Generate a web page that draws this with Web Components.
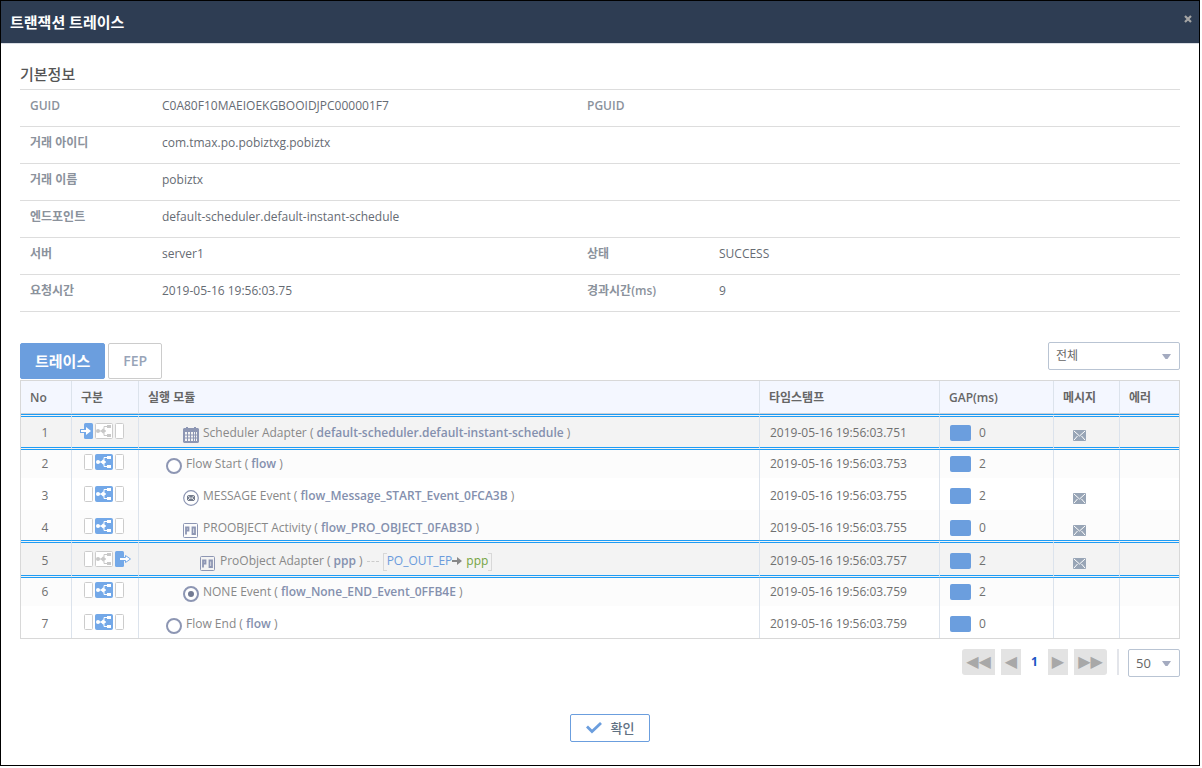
<!DOCTYPE html>
<html lang="ko">
<head>
<meta charset="utf-8">
<title>트랜잭션 트레이스</title>
<style>
  body {
    margin: 0 2px 2px 0;
    background: #fff;
    color: #707070;
    font: 12px/20px "Open Sans", "Noto Sans CJK KR", sans-serif;
  }
</style>
</head>
<body>
<trace-dialog heading="트랜잭션 트레이스">
  <info-section heading="기본정보"></info-section>
  <trace-toolbar></trace-toolbar>
  <trace-table></trace-table>
  <trace-pager></trace-pager>
  <confirm-button slot="footer">확인</confirm-button>
</trace-dialog>

<script>
class BaseElement extends HTMLElement {
  connectedCallback() {
    if (!this.shadowRoot) this.attachShadow({ mode: 'open' }).innerHTML = this.render();
  }
}

/* Dialog frame: title bar, body slot and footer slot */
customElements.define('trace-dialog', class extends BaseElement {
  render() {
    return `
    <style>
      :host { display: flex; flex-direction: column; box-sizing: border-box; min-height: calc(100vh - 2px); border: 1px solid #000; background: #fff; }
      header { display: flex; justify-content: space-between; align-items: center; height: 42px; padding: 0 2px 0 9px; background: #2e3d53; border-bottom: 1px solid #d9dde4; }
      h1 { margin: 0; font-size: 15px; line-height: 20px; font-weight: 600; color: #fff; }
      button { align-self: flex-start; display: grid; place-items: center; width: 18px; height: 18px; margin: 9px 0 0; padding: 0; border: 0; background: none; }
      main { padding: 20px 19px 0; }
      footer { display: flex; justify-content: center; padding: 37px 0 23px 20px; }
    </style>
    <header>
      <h1>${this.getAttribute('heading')}</h1>
      <button type="button" aria-label="닫기"><svg width="8" height="8" viewBox="0 0 8 8"><path d="M1 1l6 6M7 1l-6 6" stroke="#a5a5a5" stroke-width="2.2"/></svg></button>
    </header>
    <main><slot></slot></main>
    <footer><slot name="footer"></slot></footer>`;
  }
});

/* Basic transaction properties */
customElements.define('info-section', class extends BaseElement {
  render() {
    const rows = [
      ['GUID', 'C0A80F10MAEIOEKGBOOIDJPC000001F7', 'PGUID', ''],
      ['거래 아이디', 'com.tmax.po.pobiztxg.pobiztx'],
      ['거래 이름', 'pobiztx'],
      ['엔드포인트', 'default-scheduler.default-instant-schedule'],
      ['서버', 'server1', '상태', 'SUCCESS'],
      ['요청시간', '2019-05-16 19:56:03.75', '경과시간(ms)', '9'],
    ];
    const row = ([a, b, c, d]) => c
      ? `<tr><th scope="row">${a}</th><td>${b}</td><th scope="row">${c}</th><td>${d}</td></tr>`
      : `<tr><th scope="row">${a}</th><td colspan="3">${b}</td></tr>`;
    return `
    <style>
      :host { display: block; }
      h2 { margin: 0 0 5px; font-size: 15px; line-height: 20px; font-weight: 500; color: #555; }
      table { width: 100%; table-layout: fixed; border-spacing: 0; border-top: 1px solid #ddd; }
      .label { width: 132px; }
      .value { width: 425px; }
      th, td { height: 20px; padding: 6px 0 10px 10px; border-bottom: 1px solid #ddd; text-align: left; vertical-align: top; }
      th { font-weight: 600; color: #8b929c; }
      td { color: #666b73; }
    </style>
    <h2>${this.getAttribute('heading')}</h2>
    <table>
      <colgroup><col class="label"><col class="value"><col class="label"><col></colgroup>
      <tbody>${rows.map(row).join('')}</tbody>
    </table>`;
  }
});

/* Drop-down with a flat arrow */
customElements.define('select-box', class extends BaseElement {
  render() {
    return `
    <style>
      :host { display: inline-grid; align-items: center; }
      select, svg { grid-area: 1 / 1; }
      select { appearance: none; box-sizing: border-box; width: 100%; height: 28px; margin: 0; padding: 0 7px; border: 1px solid #b9c4d3; border-radius: 2px; background: #fff; color: #666; font: inherit; }
      svg { justify-self: end; margin-right: 9px; pointer-events: none; }
    </style>
    <select aria-label="${this.getAttribute('label')}"><option>${this.getAttribute('value')}</option></select>
    <svg width="9" height="5" viewBox="0 0 9 5"><path d="M0 0h9L5.500 5h-2z" fill="#a4abc0"/></svg>`;
  }
});

/* Tabs and filter above the table */
customElements.define('trace-toolbar', class extends BaseElement {
  render() {
    return `
    <style>
      :host { display: flex; justify-content: space-between; align-items: flex-start; margin-top: 30px; }
      .tabs { display: flex; gap: 3px; padding: 1px 0; }
      button { box-sizing: border-box; height: 36px; margin: 0; padding: 0 14px; border: 1px solid #ccc; border-radius: 2px; background: #fff; color: #98a4b8; font: 600 14px/20px "Open Sans", "Noto Sans CJK KR", sans-serif; }
      button[aria-selected="true"] { border-color: #6b9ede; background: #6b9ede; color: #fff; font-size: 15px; font-weight: 700; }
      select-box { width: 132px; }
    </style>
    <div class="tabs" role="tablist">
      <button type="button" role="tab" aria-selected="true">트레이스</button>
      <button type="button" role="tab" aria-selected="false">FEP</button>
    </div>
    <select-box label="필터" value="전체"></select-box>`;
  }
});

/* Where in the flow a step runs: inbound, engine or outbound */
customElements.define('stage-icon', class extends BaseElement {
  render() {
    const stage = this.getAttribute('stage');
    const box = x => `<rect x="${x}.5" y=".5" width="8" height="15" rx="1" fill="#fff" stroke="#ccc"/>`;
    const on = stage === 'flow';
    const ink = on ? '#fff' : '#c8c8c8';
    const inbound = stage === 'in'
      ? `<rect x="4" width="9" height="16" rx="1.500" fill="#73a8e8"/><path d="M0 6h5v4H0z" fill="#73a8e8"/><path d="M1 7h5V4l5 4-5 4V9H1z" fill="#fff"/>`
      : box(4);
    const outbound = stage === 'out'
      ? `<rect x="35" width="9" height="16" rx="1.500" fill="#73a8e8"/><path d="M40 7h5.500V4.500l5 3.500-5 3.500V9H40z" fill="#fff"/><path d="M44 6.500h1.500v-2L50.500 8l-5 3.500v-2H44" fill="#fff" stroke="#73a8e8"/>`
      : box(35);
    return `
    <style>:host { display: block; height: 20px; } svg { display: block; }</style>
    <svg width="52" height="16" viewBox="0 0 52 16">
      ${inbound}
      <rect x="15.500" y=".5" width="17" height="15" rx="1" fill="${on ? '#73a8e8' : '#fff'}" stroke="${on ? '#73a8e8' : '#ccc'}"/>
      <path d="M17 8h9M24 8V3.500h4M24 8v4.500h4" fill="none" stroke="${ink}"/>
      <circle cx="18" cy="8" r="2" fill="${ink}"/>
      <path d="M20.500 8L23.500 5v6zM23 5.500L26 8l-3 2.500z" fill="${ink}"/>
      <rect x="27" y="2" width="4" height="3" fill="${ink}"/><rect x="27" y="11" width="4" height="3" fill="${ink}"/>
      ${outbound}
    </svg>`;
  }
});

/* Kind of module that was executed */
customElements.define('module-icon', class extends BaseElement {
  render() {
    const c = '#8d96b3';
    const shapes = {
      calendar: `<path d="M1 1h2V0h2v1h6V0h2v1h2l1 1v13l-1 1H1l-1-1V2z" fill="${c}"/><path d="M1.500 5h13v9.500h-13z" fill="#f3f3f3"/><path d="M4.500 5v10M7.500 5v10M10.500 5v10M12.500 5v10M1 8h14M1 11h14" stroke="${c}"/><path d="M1.500 4.500h13v10h-13z" fill="none" stroke="${c}"/>`,
      circle: `<circle cx="8" cy="8" r="7" fill="#fff" stroke="${c}" stroke-width="2"/>`,
      message: `<circle cx="8" cy="8" r="7.300" fill="#fff" stroke="${c}" stroke-width="1.200"/><path d="M4 5h8v6H4z" fill="#737b8c"/><path d="M4 5l4 3.500L12 5M4 11l3-3M12 11L9 8" fill="none" stroke="#fff" stroke-width=".8"/>`,
      end: `<circle cx="8" cy="8" r="7" fill="#fff" stroke="${c}" stroke-width="2"/><circle cx="8" cy="8" r="3" fill="#737b93"/>`,
      po: `<rect x=".5" y="1.500" width="14" height="14" rx="1" fill="none" stroke="${c}"/><path d="M3 12.500V5.500h2.500v3H3M9.500 5.500h2.500v6.500H9.500z" fill="none" stroke="${c}" stroke-width="1.800"/>`,
    };
    return `
    <style>:host { display: block; } svg { display: block; }</style>
    <svg width="16" height="16" viewBox="0 0 16 16">${shapes[this.getAttribute('kind')]}</svg>`;
  }
});

/* List of executed steps */
customElements.define('trace-table', class extends BaseElement {
  render() {
    const date = '2019-05-16 19:56:03.';
    const rows = [
      { stage: 'in', level: 1, icon: 'calendar', kind: 'Scheduler Adapter', name: 'default-scheduler.default-instant-schedule', ms: '751', gap: 0, mail: true, edge: true },
      { stage: 'flow', level: 0, icon: 'circle', kind: 'Flow Start', name: 'flow', ms: '753', gap: 2 },
      { stage: 'flow', level: 1, icon: 'message', kind: 'MESSAGE Event', name: 'flow_Message_START_Event_0FCA3B', ms: '755', gap: 2, mail: true },
      { stage: 'flow', level: 1, icon: 'po', kind: 'PROOBJECT Activity', name: 'flow_PRO_OBJECT_0FAB3D', ms: '755', gap: 0, mail: true },
      { stage: 'out', level: 2, icon: 'po', kind: 'ProObject Adapter', name: 'ppp', ms: '757', gap: 2, mail: true, edge: true, route: ['PO_OUT_EP', 'ppp'] },
      { stage: 'flow', level: 1, icon: 'end', kind: 'NONE Event', name: 'flow_None_END_Event_0FFB4E', ms: '759', gap: 2 },
      { stage: 'flow', level: 0, icon: 'circle', kind: 'Flow End', name: 'flow', ms: '759', gap: 0 },
    ];
    const route = ([from, to]) => `
      <span class="dots"></span><span class="route"><span class="from">${from}</span><svg width="10" height="10" viewBox="0 0 10 10"><path d="M0 4h5V1l5 4-5 4V6H0z" fill="#888"/></svg><span class="to">${to}</span></span>`;
    const mail = `<button type="button" class="mail" aria-label="메시지"><svg width="13" height="11" viewBox="0 0 13 11"><rect width="13" height="11" rx="1" fill="#98a5b6"/><path d="M1 1l5.500 5L12 1M1 10l3.500-4M12 10L8.500 6" fill="none" stroke="#fff"/></svg></button>`;
    const row = (r, i) => `
      <tr${r.edge ? ' class="edge"' : ''}>
        <td class="no">${i + 1}</td>
        <td class="stage"><stage-icon stage="${r.stage}"></stage-icon></td>
        <td><div class="module level${r.level}"><module-icon kind="${r.icon}"></module-icon><span>${r.kind} ( <b>${r.name}</b> )</span>${r.route ? route(r.route) : ''}</div></td>
        <td>${date}${r.ms}</td>
        <td><div class="gap"><i></i>${r.gap}</div></td>
        <td class="message">${r.mail ? mail : ''}</td>
        <td></td>
      </tr>`;
    return `
    <style>
      :host { display: block; }
      table { width: 100%; table-layout: fixed; border-spacing: 0; border: 1px solid #d8d8d8; }
      .c-no { width: 51px; } .c-stage { width: 67px; } .c-time { width: 180px; } .c-gap { width: 114px; } .c-mail { width: 66px; } .c-err { width: 59px; }
      th, td { box-sizing: border-box; border-right: 1px solid #dce3ec; text-align: left; }
      th:last-child, td:last-child { border-right: 0; }
      th { height: 33px; padding: 1px 0 0 9px; border-bottom: 1px solid #ccd0d6; background: #f4f7ff; color: #666; font-weight: 600; }
      td { height: 32px; padding: 8px 0 0 10px; vertical-align: top; }
      tr:nth-child(even) td { background: #fcfcfc; }
      tr:has(+ .edge) td { height: 30px; }
      .edge + tr td { height: 28px; padding-top: 4px; }
      tr:nth-child(n).edge td { height: 38px; border-top: 3px double #1e9cf5; border-bottom: 3px double #1e9cf5; background: #f3f3f3; }
      tr:first-child.edge td { height: 36px; padding-top: 6px; }
      tr:nth-child(6) td { background: #fcfcfc; }
      td.no { padding-left: 0; padding-right: 2px; text-align: center; }
      td.stage { padding-left: 8px; }
      td.message { padding-left: 19px; }
      .module { display: flex; align-items: flex-end; gap: 4px; height: 20px; color: #888; white-space: nowrap; }
      .level0 { padding-left: 17px; } .level1 { padding-left: 34px; } .level2 { padding-left: 51px; }
      b { font-weight: 600; color: #8490ae; }
      .dots { align-self: center; width: 12px; border-top: 1px dashed #ccc; }
      .route { position: relative; display: flex; align-items: center; padding: 0 4px; }
      .route::before, .route::after { content: ""; position: absolute; top: 2px; bottom: 0; width: 4px; box-sizing: border-box; border: 1px solid #d8d8d8; }
      .route::before { left: 0; border-right: 0; }
      .route::after { right: 0; border-left: 0; }
      .from { color: #6b9bdc; } .to { margin-left: 4px; color: #74a342; }
      .gap { display: flex; align-items: center; gap: 8px; height: 20px; }
      .gap i { width: 21px; height: 16px; border-radius: 2px; background: #6b9ede; }
      .mail { display: block; margin: 0; padding: 7px 0 0; border: 0; background: none; }
      .mail svg { display: block; }
    </style>
    <table>
      <colgroup><col class="c-no"><col class="c-stage"><col><col class="c-time"><col class="c-gap"><col class="c-mail"><col class="c-err"></colgroup>
      <thead><tr><th>No</th><th>구분</th><th>실행 모듈</th><th>타임스탬프</th><th>GAP(ms)</th><th>메시지</th><th>에러</th></tr></thead>
      <tbody>${rows.map(row).join('')}</tbody>
    </table>`;
  }
});

/* Paging controls and page size */
customElements.define('trace-pager', class extends BaseElement {
  render() {
    return `
    <style>
      :host { display: flex; justify-content: flex-end; align-items: flex-start; gap: 6px; margin-top: 10px; }
      button { width: 20px; height: 26px; margin: 0; padding: 0; border: 0; background: #e3e3e3; color: #a8a8a8; font: 16px/20px "DejaVu Sans", sans-serif; }
      .first, .last { width: 33px; }
      .first { border-radius: 3px 0 0 3px; }
      .last { border-radius: 0 3px 3px 0; }
      strong { width: 15px; line-height: 26px; text-align: center; font-weight: 700; color: #1b55c4; }
      hr { width: 2px; height: 26px; margin: 0 3px 0 4px; border: 0; background: #e3e5ea; }
      select-box { width: 52px; font-size: 13px; }
    </style>
    <button type="button" class="first">◀◀</button>
    <button type="button">◀</button>
    <strong>1</strong>
    <button type="button">▶</button>
    <button type="button" class="last">▶▶</button>
    <hr>
    <select-box label="페이지 크기" value="50"></select-box>`;
  }
});

customElements.define('confirm-button', class extends BaseElement {
  render() {
    return `
    <style>
      :host { display: block; }
      button { display: flex; align-items: center; gap: 9px; box-sizing: border-box; height: 28px; margin: 0; padding: 0 15px; border: 1px solid #6b9ede; border-radius: 2px; background: #fff; color: #5f7183; font: 500 13px/20px "Open Sans", "Noto Sans CJK KR", sans-serif; }
    </style>
    <button type="button"><svg width="16" height="12" viewBox="0 0 16 12"><path d="M1 4.500l5 5L15 1" fill="none" stroke="#6b9ede" stroke-width="2.800"/></svg><slot></slot></button>`;
  }
});
</script>
</body>
</html>
